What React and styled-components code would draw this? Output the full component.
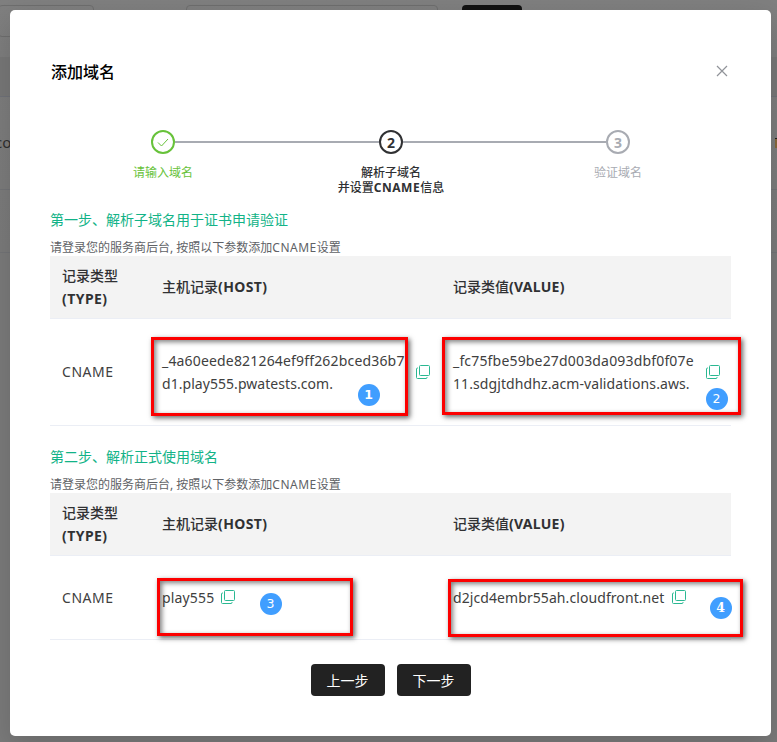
import React from "react";
import styled, { createGlobalStyle, css } from "styled-components";

const Global = createGlobalStyle`
  * { box-sizing: border-box; }
  body {
    margin: 0;
    overflow: hidden;
    font-family: "Noto Sans", "Noto Sans CJK SC", sans-serif;
    font-size: 14px;
    color: #303133;
  }
`;

const Screen = styled.div`
  position: relative;
  width: 777px;
  height: 742px;
  overflow: hidden;
  background: linear-gradient(#808080, #7c7c7c 250px);
`;

const BackPage = styled.div`
  display: flex;
  flex-direction: column;
  height: 742px;
`;
const Filters = styled.div`
  display: flex;
  height: 57px;
  padding-top: 5px;
`;
const Field = styled.div`
  width: ${(p) => p.$width}px;
  height: 32px;
  margin-left: ${(p) => p.$gap || 0}px;
  border: 1px solid #6f6f6f;
  border-radius: 4px;
`;
const DarkButton = styled.div`
  width: 60px;
  height: 32px;
  margin-left: 24px;
  background: #111;
  border-radius: 4px;
`;
const BackHead = styled.div`
  height: 40px;
  background: #797979;
  border-bottom: 1px solid #71737a;
`;
const BackRow = styled.div`
  display: flex;
  align-items: center;
  justify-content: space-between;
  height: ${(p) => p.$height}px;
  border-bottom: 1px solid #747578;
  color: #303030;
`;
const Domain = styled.span`
  margin: -3px 0 0 -5px;
  font-size: 15px;
`;
const StatusMark = styled.span`
  width: 2px;
  height: 10px;
  background: #8a6a3c;
  border-top: 1px solid #222;
`;

const Overlay = styled.div`
  position: absolute;
  inset: 0;
  padding: 10px 6px 6px 10px;
`;
const Dialog = styled.section`
  position: relative;
  display: flex;
  flex-direction: column;
  height: 726px;
  padding: 0 40px;
  background: #fff;
  border-radius: 5px;
  box-shadow: 0 12px 32px 4px rgba(0, 0, 0, 0.14);
`;
const Header = styled.header`
  display: flex;
  align-items: center;
  justify-content: space-between;
  height: 120px;
  padding: 2px 3px 0 1px;
`;
const Title = styled.h1`
  margin: 2px 0 0;
  font-size: 16px;
  font-weight: 500;
  line-height: 24px;
  color: #000;
`;
const CloseIcon = styled.svg`
  width: 12px;
  height: 12px;
  fill: none;
  stroke: #909399;
  stroke-width: 1.2;
`;

const Steps = styled.ol`
  display: grid;
  grid-template-columns: 226px 230px 224px;
  height: 80px;
  margin: 0;
  padding: 0;
  list-style: none;
`;
const Step = styled.li`
  display: flex;
  flex-direction: column;
  align-items: center;
  font-size: 12px;
  line-height: 15px;
  text-align: center;
  color: ${(p) => p.$color};
  font-weight: ${(p) => (p.$strong ? 500 : 400)};
`;
const StepTrack = styled.div`
  display: grid;
  grid-template-columns: 1fr 24px 1fr;
  align-items: center;
  width: 100%;
  height: 24px;
  margin-bottom: 11px;
`;
const Line = styled.span`
  height: 2px;
  background: ${(p) => (p.$hidden ? "transparent" : "#a8abb2")};
`;
const StepCircle = styled.span`
  display: flex;
  align-items: center;
  justify-content: center;
  height: 24px;
  border: 2px solid currentColor;
  border-radius: 50%;
  font-size: 14px;
  font-weight: 700;
`;
const Latin = styled.span`
  font-weight: ${(p) => p.$weight || 400};
  letter-spacing: ${(p) => p.$spacing || 0}px;
`;

const Section = styled.section`
  height: ${(p) => p.$height}px;
`;
const StepTitle = styled.h2`
  margin: 0;
  height: 28px;
  font-size: 14px;
  font-weight: 400;
  line-height: 20px;
  color: #12b387;
`;
const Hint = styled.p`
  margin: 0;
  height: 18px;
  padding-top: 2px;
  font-size: 12px;
  line-height: 16px;
  color: #606266;
`;
const grid = css`
  display: grid;
  grid-template-columns: 100px 291px 290px;
  align-items: center;
`;
const TableHead = styled.div`
  ${grid}
  height: 63px;
  padding-bottom: 1px;
  background: #f3f3f3;
  border-bottom: 1px solid #ebeef5;
  font-weight: 500;
  line-height: 23px;
`;
const TableRow = styled.div`
  ${grid}
  height: ${(p) => p.$height}px;
  border-bottom: 1px solid #ebeef5;
  line-height: 23px;
  color: #404040;
`;
const Cell = styled.div`
  display: flex;
  align-items: center;
  padding: 0 0 ${(p) => p.$raise || 0}px 12px;
  white-space: nowrap;
`;
const Text = styled.span`
  display: block;
  font-weight: ${(p) => p.$weight || "inherit"};
  letter-spacing: ${(p) => p.$spacing || 0}px;
`;
const CellLines = styled.div`
  width: ${(p) => p.$width}px;
`;
const CopySvg = styled.svg`
  flex: none;
  width: 14px;
  height: 14px;
  fill: none;
  stroke: #2bb892;
`;

const Footer = styled.footer`
  display: flex;
  justify-content: center;
  gap: 12px;
  padding-top: 24px;
`;
const Button = styled.button`
  width: 74px;
  height: 32px;
  padding: 0;
  border: 0;
  border-radius: 4px;
  background: #222;
  color: #fff;
  font: inherit;
`;

const Highlight = styled.div`
  position: absolute;
  left: ${(p) => p.$x}px;
  top: ${(p) => p.$y}px;
  width: ${(p) => p.$w}px;
  height: ${(p) => p.$h}px;
  border: 3px solid #fc0000;
  box-shadow: 2px 2px 5px rgba(0, 0, 0, 0.6), inset 2px 2px 5px rgba(0, 0, 0, 0.5);
`;
const Marker = styled.span`
  position: absolute;
  left: ${(p) => p.$x}px;
  top: ${(p) => p.$y}px;
  width: 22px;
  height: 22px;
  border-radius: 50%;
  background: #409eff;
  color: #fff;
  font-family: ${(p) => (p.$serif ? '"DejaVu Serif", serif' : '"DejaVu Sans", sans-serif')};
  font-size: 12.5px;
  font-weight: ${(p) => (p.$bold ? 700 : 400)};
  line-height: 22px;
  text-align: center;
`;

const CopyIcon = () => (
  <CopySvg viewBox="0 0 14 14">
    <rect x="3.5" y="0.5" width="10" height="10" rx="1" />
    <path d="M2 3H1.5Q.5 3 .5 4v8.500q0 1 1 1H10q1 0 1-1v-.5" />
  </CopySvg>
);

const RecordHead = () => (
  <TableHead>
    <Cell>
      <div>
        <Text>记录类型</Text>
        <Text $weight={700} $spacing={0.45}>(TYPE)</Text>
      </div>
    </Cell>
    <Cell $raise={1}>主机记录<Text $weight={700} $spacing={0.4}>(HOST)</Text></Cell>
    <Cell $raise={1}>记录类值<Text $weight={700} $spacing={0.27}>(VALUE)</Text></Cell>
  </TableHead>
);

const HintText = () => (
  <Hint>
    请登录您的服务商后台, 按照以下参数添加<Latin $spacing={0.5}>CNAME</Latin>设置
  </Hint>
);

export default function App() {
  return (
    <Screen>
      <Global />
      <BackPage>
        <Filters>
          <Field $width={96} $gap={-2} />
          <Field $width={252} $gap={92} />
          <DarkButton />
        </Filters>
        <BackHead />
        <BackRow $height={93}><Domain>co</Domain><StatusMark /></BackRow>
        <BackRow $height={63} />
      </BackPage>
      <Overlay>
        <Dialog>
          <Header>
            <Title>添加域名</Title>
            <CloseIcon viewBox="0 0 12 12"><path d="M1 1l10 10M11 1L1 11" /></CloseIcon>
          </Header>
          <Steps>
            <Step $color="#67c23a">
              <StepTrack>
                <Line $hidden />
                <StepCircle>
                  <svg width="14" height="14" viewBox="0 0 14 14" fill="none" stroke="currentColor"><path d="M2 7.500l3.500 3.500L12 4" /></svg>
                </StepCircle>
                <Line />
              </StepTrack>
              <span>请输入域名</span>
            </Step>
            <Step $color="#303133" $strong>
              <StepTrack><Line /><StepCircle>2</StepCircle><Line /></StepTrack>
              <span>解析子域名<br />并设置<Latin $weight={700} $spacing={0.5}>CNAME</Latin>信息</span>
            </Step>
            <Step $color="#a8abb2">
              <StepTrack><Line /><StepCircle>3</StepCircle><Line $hidden /></StepTrack>
              <span>验证域名</span>
            </Step>
          </Steps>
          <Section $height={237}>
            <StepTitle>第一步、解析子域名用于证书申请验证</StepTitle>
            <HintText />
            <RecordHead />
            <TableRow $height={107}>
              <Cell $raise={2}><Text $spacing={0.55}>CNAME</Text></Cell>
              <Cell>
                <CellLines $width={254}>
                  <Text $spacing={0.17}>_4a60eede821264ef9ff262bced36b7</Text>
                  <Text $spacing={0.05}>d1.play555.pwatests.com.</Text>
                </CellLines>
                <CopyIcon />
              </Cell>
              <Cell>
                <CellLines $width={253}>
                  <Text $spacing={0.17}>_fc75fbe59be27d003da093dbf0f07e</Text>
                  <Text $spacing={0.09}>11.sdgjtdhdhz.acm-validations.aws.</Text>
                </CellLines>
                <CopyIcon />
              </Cell>
            </TableRow>
          </Section>
          <Section $height={193}>
            <StepTitle>第二步、解析正式使用域名</StepTitle>
            <HintText />
            <RecordHead />
            <TableRow $height={84}>
              <Cell><Text $spacing={0.55}>CNAME</Text></Cell>
              <Cell $raise={1}>
                <CellLines $width={59}><Text $spacing={0.15}>play555</Text></CellLines>
                <CopyIcon />
              </Cell>
              <Cell $raise={1}>
                <CellLines $width={219}><Text $spacing={0.08}>d2jcd4embr55ah.cloudfront.net</Text></CellLines>
                <CopyIcon />
              </Cell>
            </TableRow>
          </Section>
          <Footer>
            <Button>上一步</Button>
            <Button>下一步</Button>
          </Footer>
          <Highlight $x={141} $y={327} $w={257} $h={79} />
          <Highlight $x={432} $y={327} $w={299} $h={78} />
          <Highlight $x={147} $y={568} $w={196} $h={58} />
          <Highlight $x={438} $y={569} $w={295} $h={58} />
          <Marker $x={347.5} $y={373.5} $bold>1</Marker>
          <Marker $x={695.5} $y={377.5}>2</Marker>
          <Marker $x={249.5} $y={582.5}>3</Marker>
          <Marker $x={699.5} $y={586.5} $serif $bold>4</Marker>
        </Dialog>
      </Overlay>
    </Screen>
  );
}
